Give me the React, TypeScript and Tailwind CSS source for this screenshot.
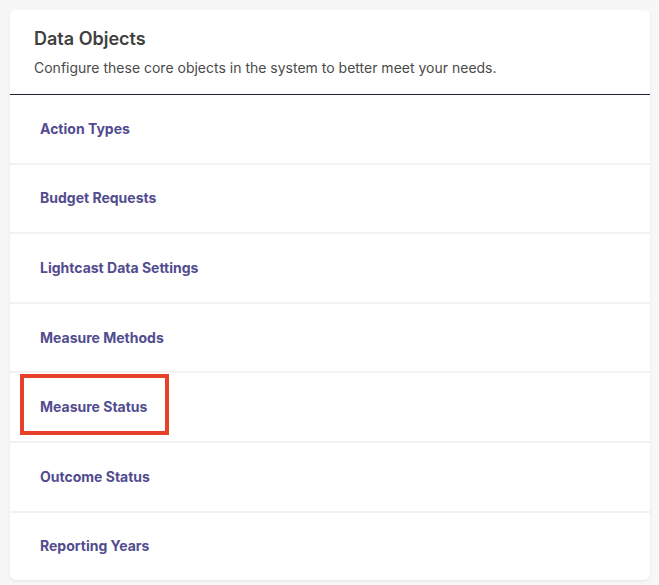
import React from 'react';

const items = [
  'Action Types',
  'Budget Requests',
  'Lightcast Data Settings',
  'Measure Methods',
  'Measure Status',
  'Outcome Status',
  'Reporting Years',
];

export default function App() {
  return (
    <div className="min-h-screen bg-[#f7f7f7] p-[10px] font-['Inter','Liberation_Sans',sans-serif]">
      <div className="w-[640px] overflow-hidden rounded-md bg-white shadow-[0_1px_3px_rgba(0,0,0,0.08)]">
        {/* header */}
        <div className="flex flex-col gap-[5px] border-b border-[#2b1d3d] px-6 pb-4 pt-[15px]">
          <h2 className="text-lg font-semibold leading-7 text-[#404040]">Data Objects</h2>
          <p className="text-sm leading-5 text-[#4a4a4a]">
            Configure these core objects in the system to better meet your needs.
          </p>
        </div>

        {/* list */}
        <ul>
          {items.map((label, i) => (
            <li
              key={label}
              className={
                'relative flex h-[67.6px] items-center pl-[30px] ' +
                (i > 0 ? 'box-content border-t-2 border-[#f2f2f2]' : '')
              }
            >
              <span className="text-sm font-bold text-[#524c8f]">{label}</span>
              {label === 'Measure Status' && (
                <span className="pointer-events-none absolute left-[10px] top-[1px] h-[61px] w-[149px] border-4 border-[#e8412a]" />
              )}
            </li>
          ))}
        </ul>
      </div>
    </div>
  );
}
